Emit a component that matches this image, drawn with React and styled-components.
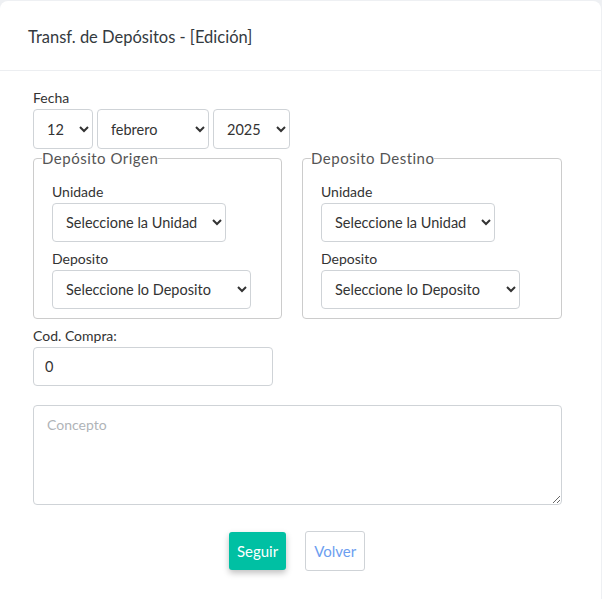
import React from "react";
import styled, { createGlobalStyle } from "styled-components";

const GlobalStyle = createGlobalStyle`
  body {
    margin: 0;
    background: #eef0f3;
    font-family: "Lato", "Noto Sans", sans-serif;
    color: #333;
  }
`;

const DAYS = Array.from({ length: 31 }, (_, i) => i + 1);
const MONTHS = [
  "enero", "febrero", "marzo", "abril", "mayo", "junio",
  "julio", "agosto", "septiembre", "octubre", "noviembre", "diciembre",
];
const YEARS = [2023, 2024, 2025, 2026];

function DepositBox({ title }) {
  return (
    <Fieldset>
      <Legend>{title}</Legend>
      <Label>Unidade</Label>
      <Select width="174px" height="39px" defaultValue="">
        <option value="">Seleccione la Unidad</option>
      </Select>
      <Label top="8px">Deposito</Label>
      <Select width="199px" height="39px" defaultValue="">
        <option value="">Seleccione lo Deposito</option>
      </Select>
    </Fieldset>
  );
}

export default function App() {
  return (
    <>
      <GlobalStyle />
      <Card>
        <Header>
          <Title>Transf. de Depósitos - [Edición]</Title>
        </Header>
        <Body>
          <Label>Fecha</Label>
          <DateRow>
            <Select width="60px" defaultValue="12">
              {DAYS.map((d) => (
                <option key={d} value={d}>{d}</option>
              ))}
            </Select>
            <Select width="112px" defaultValue="febrero">
              {MONTHS.map((m) => (
                <option key={m} value={m}>{m}</option>
              ))}
            </Select>
            <Select width="77px" defaultValue="2025">
              {YEARS.map((y) => (
                <option key={y} value={y}>{y}</option>
              ))}
            </Select>
          </DateRow>
          <BoxRow>
            <DepositBox title="Depósito Origen" />
            <DepositBox title="Deposito Destino" />
          </BoxRow>
          <Label top="8px">Cod. Compra:</Label>
          <Input defaultValue="0" />
          <TextArea placeholder="Concepto" />
          <Actions>
            <PrimaryButton>Seguir</PrimaryButton>
            <GhostButton>Volver</GhostButton>
          </Actions>
        </Body>
      </Card>
    </>
  );
}

const Card = styled.div`
  width: 601px;
  min-height: 598px;
  margin-top: 1px;
  background: #ffffff;
  border-radius: 8px 8px 0 0;
  box-sizing: border-box;
`;

const Header = styled.div`
  height: 70px;
  padding: 3px 28px 0;
  box-sizing: border-box;
  display: flex;
  align-items: center;
  border-bottom: 1px solid #eceef1;
`;

const Title = styled.h1`
  margin: 0;
  font-size: 16.5px;
  font-weight: 400;
  color: #343a40;
`;

const Body = styled.div`
  padding: 18px 40px 0 33px;
  display: flex;
  flex-direction: column;
`;

const Label = styled.label`
  display: block;
  font-size: 14px;
  line-height: 18px;
  color: #333;
  margin: ${(p) => p.top || "0"} 0 2px;
`;

const DateRow = styled.div`
  display: flex;
  gap: 4px;
`;

const Select = styled.select`
  flex-shrink: 0;
  width: ${(p) => p.width};
  height: ${(p) => p.height || "40px"};
  padding: 0 6px 0 9px;
  font-family: inherit;
  font-size: 14.5px;
  color: #333;
  background: #fff;
  border: 1px solid #cfd3d7;
  border-radius: 4px;
  box-sizing: border-box;
`;

const BoxRow = styled.div`
  display: grid;
  grid-template-columns: 249px 260px;
  gap: 20px;
`;

const Fieldset = styled.fieldset`
  margin: 0;
  padding: 16px 18px 9px;
  border: 1px solid #cccccc;
  border-radius: 4px;
  min-width: 0;
  display: flex;
  flex-direction: column;
  align-items: flex-start;
`;

const Legend = styled.legend`
  padding: 0;
  margin-left: -10px;
  font-size: 15px;
  line-height: 18px;
  letter-spacing: 0.5px;
  color: #555;
`;

const Input = styled.input`
  width: 240px;
  height: 39px;
  padding: 0 11px;
  font-family: inherit;
  font-size: 14.5px;
  color: #333;
  border: 1px solid #cfd3d7;
  border-radius: 4px;
  box-sizing: border-box;
`;

const TextArea = styled.textarea`
  margin-top: 19px;
  width: 529px;
  height: 100px;
  padding: 10px 13px;
  font-family: inherit;
  font-size: 14px;
  color: #333;
  border: 1px solid #cfd3d7;
  border-radius: 4px;
  box-sizing: border-box;
  resize: vertical;

  &::placeholder {
    color: #b0b4b8;
  }
`;

const Actions = styled.div`
  display: flex;
  justify-content: center;
  align-items: center;
  gap: 19px;
  margin-top: 26px;
`;

const PrimaryButton = styled.button`
  height: 38px;
  padding: 0 8px;
  font-family: inherit;
  font-size: 15px;
  color: #fff;
  background: #00c0a3;
  border: none;
  border-radius: 3px;
  box-shadow: 0 3px 6px rgba(0, 0, 0, 0.25);
`;

const GhostButton = styled.button`
  height: 40px;
  padding: 0 8px;
  font-family: inherit;
  font-size: 15px;
  color: #6c9ef0;
  background: #fff;
  border: 1px solid #cfd3d7;
  border-radius: 3px;
`;
